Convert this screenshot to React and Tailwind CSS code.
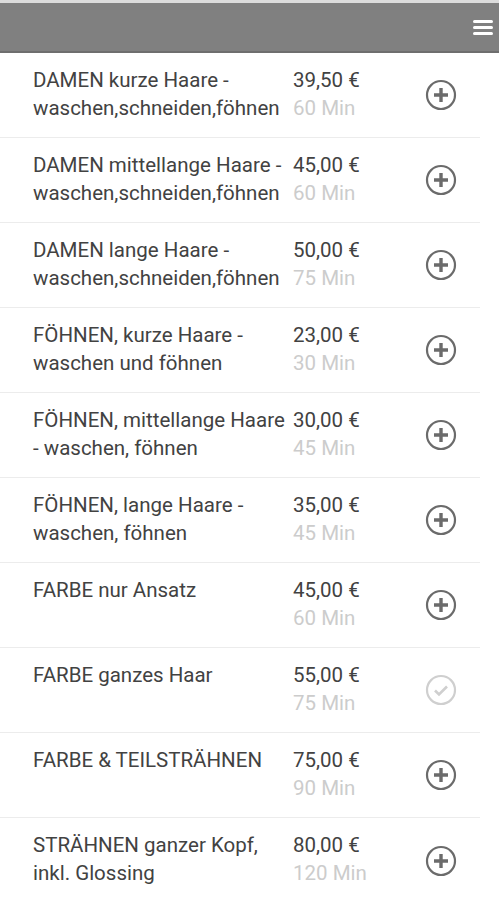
import React from "react";

const items = [
  ["DAMEN kurze Haare - waschen,schneiden,föhnen", "39,50 €", "60 Min", false],
  ["DAMEN mittellange Haare - waschen,schneiden,föhnen", "45,00 €", "60 Min", false],
  ["DAMEN lange Haare - waschen,schneiden,föhnen", "50,00 €", "75 Min", false],
  ["FÖHNEN, kurze Haare - waschen und föhnen", "23,00 €", "30 Min", false],
  ["FÖHNEN, mittellange Haare - waschen, föhnen", "30,00 €", "45 Min", false],
  ["FÖHNEN, lange Haare - waschen, föhnen", "35,00 €", "45 Min", false],
  ["FARBE nur Ansatz", "45,00 €", "60 Min", false],
  ["FARBE ganzes Haar", "55,00 €", "75 Min", true],
  ["FARBE & TEILSTRÄHNEN", "75,00 €", "90 Min", false],
  ["STRÄHNEN ganzer Kopf, inkl. Glossing", "80,00 €", "120 Min", false],
];

function PlusIcon() {
  return (
    <svg width="32" height="32" viewBox="0 0 32 32">
      <circle cx="16" cy="16" r="14" fill="none" stroke="#6b6b6b" strokeWidth="2.2" />
      <path d="M16 9v14M9 16h14" stroke="#6b6b6b" strokeWidth="3.4" strokeLinecap="butt" />
    </svg>
  );
}

function CheckIcon() {
  return (
    <svg width="32" height="32" viewBox="0 0 32 32">
      <circle cx="16" cy="16" r="14" fill="none" stroke="#cfcfcf" strokeWidth="2.2" />
      <path d="M10 16.5l4 4 8-8" fill="none" stroke="#cfcfcf" strokeWidth="2.6" />
    </svg>
  );
}

export default function App() {
  return (
    <div className="w-[499px] h-[900px] bg-white overflow-hidden" style={{ fontFamily: "Roboto, 'Liberation Sans', sans-serif" }}>
      <div className="h-[3px] bg-[#dcdcdc]" />
      <div className="h-[50px] bg-[#808080] border-b-2 border-[#6e6e6e] flex items-center justify-end pr-[6px]">
        <div className="flex flex-col gap-[3px] w-[20px]">
          <div className="h-[3px] bg-white rounded-sm" />
          <div className="h-[3px] bg-white rounded-sm" />
          <div className="h-[3px] bg-white rounded-sm" />
        </div>
      </div>
      <div className="w-[480px]">
        {items.map(([title, price, min, done], i) => (
          <div key={i} className={"flex h-[85px] pt-[13px] " + (i < items.length - 1 ? "border-b border-[#ececec]" : "")}>
            <div className="w-[258px] ml-[33px] text-[20.5px] leading-[28px] text-[#424242]">{title}</div>
            <div className="w-[100px] ml-[2px] text-[20.5px] leading-[28px] whitespace-nowrap">
              <div className="text-[#424242]">{price}</div>
              <div className="text-[#cccccc]">{min}</div>
            </div>
            <div className="ml-[32px] flex items-center pb-[13px]">
              {done ? <CheckIcon /> : <PlusIcon />}
            </div>
          </div>
        ))}
      </div>
    </div>
  );
}
